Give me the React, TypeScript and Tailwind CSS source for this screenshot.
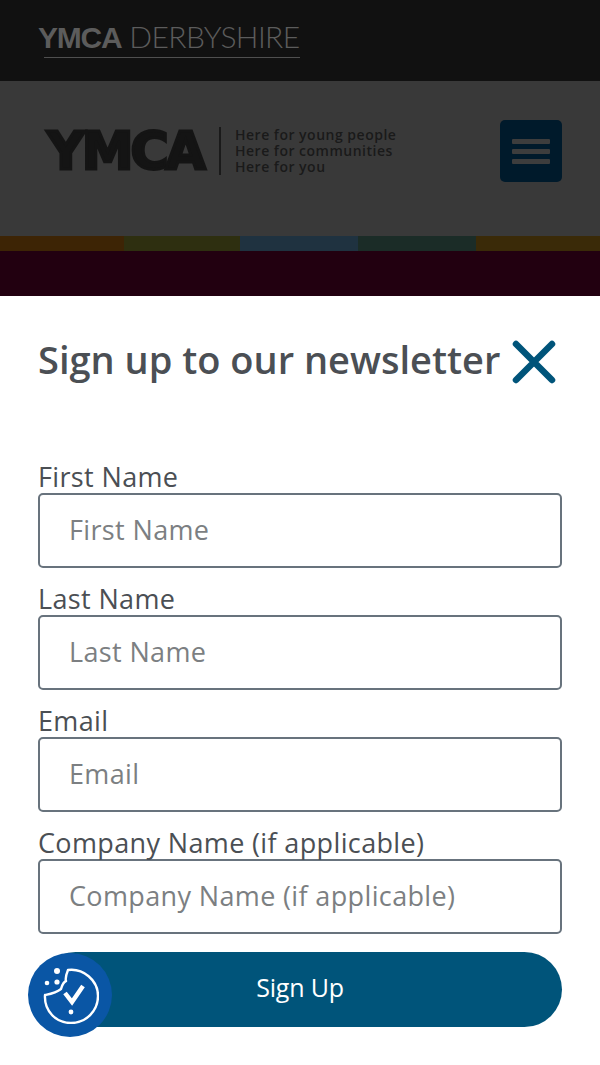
import React from 'react';

const fields = ['First Name', 'Last Name', 'Email', 'Company Name (if applicable)'];

function CookieIcon() {
  return (
    <svg viewBox="0 0 58 58" className="w-[58px] h-[58px]" fill="none" stroke="white" strokeWidth="2.4" strokeLinecap="round" strokeLinejoin="round">
      <path d="M27 4 C42 2 57 14 57 30 C57 45 45 57 30 57 C15 57 3 45 4 29 C9 28 15 27 20 23 C21 20 22 16 25 15 C24 12 25 9 27 4 Z" />
      <path d="M24 27 L31 36 L42 20" strokeWidth="4.4" strokeLinejoin="miter" strokeLinecap="butt" />
      <circle cx="30" cy="46" r="2.4" fill="white" stroke="none" />
      <circle cx="16" cy="5" r="3" fill="white" stroke="none" />
      <circle cx="6" cy="17" r="2.3" fill="white" stroke="none" />
      <circle cx="16" cy="16" r="2.6" fill="white" stroke="none" />
    </svg>
  );
}

export default function App() {
  return (
    <div className="relative w-[600px] h-[1065px] overflow-hidden bg-white font-['Open_Sans','Noto_Sans',sans-serif]">
      <div className="h-[81px] bg-[#111111] pl-[38px] pt-[16px]">
        <div className="h-[41px] text-[30px] leading-[40px] whitespace-nowrap text-[#5c5c5c]">
          <span className="font-['Liberation_Sans',sans-serif] font-bold tracking-[-1.2px]">YMCA</span>{' '}
          <span className="font-['Lato',sans-serif] font-light tracking-[-0.6px]">DERBYSHIRE</span>
        </div>
        <div className="ml-[6px] w-[256px] h-px bg-[#4f4f4f]" />
      </div>

      <div className="h-[155px] bg-[#393939] flex items-center justify-between pl-[47px] pr-[38px] pb-[15px]">
        <div className="flex items-center">
          <span className="w-[159px] text-[52px] leading-[50px] font-['DejaVu_Sans',sans-serif] font-bold tracking-[-3px] text-[#141414] [-webkit-text-stroke:3px_#141414] whitespace-nowrap">
            YMCA
          </span>
          <div className="ml-[13px] w-[2px] h-[48px] bg-[#1a1a1a]" />
          <div className="ml-[14px] text-[14px] leading-[16px] font-semibold tracking-[0.5px] text-[#1a1a1a] whitespace-nowrap">
            <p>Here for young people</p>
            <p>Here for communities</p>
            <p>Here for you</p>
          </div>
        </div>
        <div className="w-[62px] h-[62px] rounded-[5px] bg-[#001a2b] flex flex-col items-center justify-center gap-[5px]">
          <div className="w-[38px] h-[5px] rounded-[1px] bg-[#3d3d3d]" />
          <div className="w-[38px] h-[5px] rounded-[1px] bg-[#3d3d3d]" />
          <div className="w-[38px] h-[5px] rounded-[1px] bg-[#3d3d3d]" />
        </div>
      </div>

      <div className="flex h-[15px]">
        <div className="w-[124px] bg-[#3d2405]" />
        <div className="w-[116px] bg-[#2e2f10]" />
        <div className="w-[118px] bg-[#1f3240]" />
        <div className="w-[118px] bg-[#1b2c27]" />
        <div className="flex-1 bg-[#3a2a08]" />
      </div>
      <div className="h-[45px] bg-[#220010]" />

      <div className="px-[38px]">
        <div className="flex items-center justify-between h-[127px] pb-[1px]">
          <h1 className="text-[38px] leading-[50px] font-semibold text-[#4b4f54] whitespace-nowrap">Sign up to our newsletter</h1>
          <svg viewBox="0 0 44 44" className="w-[44px] h-[44px] mr-[6px] mt-[5px] shrink-0" fill="none" stroke="#00547a" strokeWidth="6.5" strokeLinecap="round">
            <path d="M4 4 L40 40 M40 4 L4 40" />
          </svg>
        </div>

        <form className="flex flex-col mt-[23px]">
          {fields.map((f) => (
            <label key={f} className="block">
              <span className="flex items-end h-[47px] text-[27px] leading-[32px] tracking-[0.36px] text-[#4b4f54] whitespace-nowrap">{f}</span>
              <input
                placeholder={f}
                className="block w-full h-[75px] rounded-[5px] border-2 border-[#68737d] px-[29px] pb-[2px] text-[27px] tracking-[0.36px] text-[#4b4f54] bg-white outline-none placeholder:text-[#7c7f82]"
              />
            </label>
          ))}
        </form>

        <button className="mt-[18px] w-full h-[75px] rounded-full bg-[#00547a] text-white text-[25px] tracking-[-0.2px] pb-[3px]">Sign Up</button>
      </div>

      <div className="absolute left-[28px] top-[953px] w-[84px] h-[84px] rounded-full bg-[#0a56a5] flex items-center justify-center">
        <CookieIcon />
      </div>
    </div>
  );
}
